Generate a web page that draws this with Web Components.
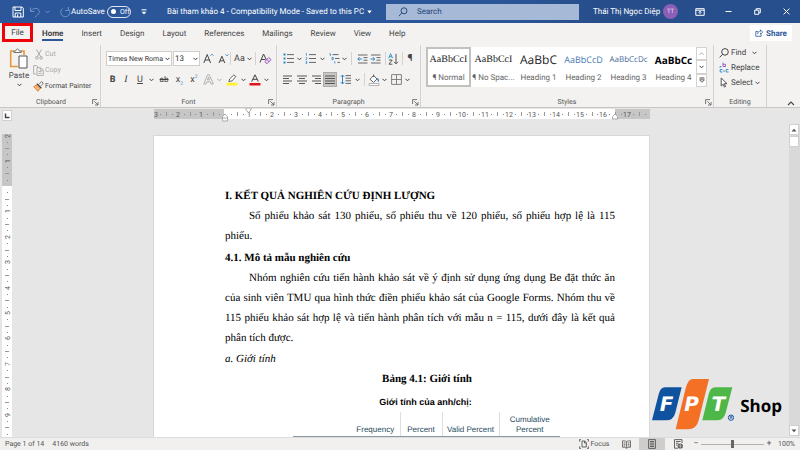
<!DOCTYPE html>
<html lang="vi">
<head>
<meta charset="utf-8">
<title>Bài tham khảo 4 - Word</title>
<style>
html, body { height: 100%; margin: 0; overflow: hidden; }
body { font-family: Roboto, "Noto Sans", sans-serif; font-size: 8px; color: #444; text-rendering: geometricPrecision; }
</style>
</head>
<body>
<word-app></word-app>
<script>
const base = `
*, *::before, *::after { box-sizing: border-box; }
button, select, input { font: inherit; color: inherit; text-rendering: inherit; margin: 0; padding: 0; border: 0; background: none; }
button { display: flex; align-items: center; justify-content: center; white-space: nowrap; }
svg { display: block; flex: none; }
`;

function define(name, css, html) {
  customElements.define(name, class extends HTMLElement {
    constructor() {
      super();
      this.attachShadow({ mode: 'open' });
    }
    connectedCallback() {
      if (this.shadowRoot.firstChild) return;
      const markup = typeof html === 'function' ? html(this) : html;
      this.shadowRoot.innerHTML = `<style>${base}${css}</style>${markup}`;
    }
  });
}

/* Icon set: [width, height, drawing] */
const lines = (rows) => rows.map(([a, b], i) => `<path d="M${a} ${i * 2.5 + 1}H${b}" stroke="#555"/>`).join('');
const icons = {
  chevron: [5, 4, '<path d="M.5 .8 2.5 2.8 4.5 .8" stroke="currentColor"/>'],
  save: [12, 12, '<path d="M1 1h9l1.3 1.2V11H1zM3 1v3.5h6V1M3.2 11V7h5.6v4M5.6 8.3V11" stroke="#fff"/>'],
  undo: [12, 12, '<path d="M1.5 1.5v4h4M1.7 5.2C4 1.8 8 1.6 9.6 3.6c1.6 2.200.6 4.600-3.600 7.400" stroke="#6f90c4"/>'],
  redo: [12, 12, '<path d="M3.600 2.500a4.600 4.600 0 1 0 5-.3M9.500 1v3.500H6" stroke="#6f90c4"/>'],
  customize: [6, 6, '<path d="M.5.8h5" stroke="#fff"/><path d="M.5 2.800h5L3 5.400z" fill="#fff"/>'],
  triangle: [5, 4, '<path d="M.3.500h4.400L2.500 3.500z" fill="#fff"/>'],
  search: [10, 10, '<circle cx="6" cy="3.800" r="3" stroke="#2b4a7c"/><path d="M3.800 6 .8 9.200" stroke="#2b4a7c"/>'],
  display: [10, 8, '<path d="M.8.700h8.400v6.600H.8zM.8 2.200h8.400M5 6V3.500M3.600 4.600 5 3.200l1.400 1.400" stroke="#fff"/>'],
  minimize: [7, 7, '<path d="M.5 3.500h6" stroke="#fff"/>'],
  restore: [7, 7, '<path d="M.7 2.200h4.100v4.100H.7zM2.200 2V.700h4.100v4.100H5" stroke="#fff"/>'],
  close: [7, 7, '<path d="m.6.6 5.800 5.800M6.400.6.6 6.400" stroke="#fff"/>'],
  share: [8, 8, '<path d="M3 2.500H.8v4.800h5.400V5.500M2.500 5c.3-2 1.500-2.700 3-2.700V.8l2.200 2.300-2.200 2.200V3.800" stroke="#2b579a" stroke-width=".8"/>'],
  paste: [20, 21, '<path d="M5 3H1.700v15.500H9" stroke="#e8973a" stroke-width="1.600"/><path d="M12 3h3v4" stroke="#e8973a" stroke-width="1.600"/><path d="M4.800 4.500V3h2c0-2.600 3.400-2.600 3.400 0h2v1.500z" fill="#fff" stroke="#666" stroke-width=".9"/><path d="M10 8h8v12h-8z" fill="#fff" stroke="#555"/>'],
  cut: [8, 11, '<path d="M1.500.5 5.700 7.600M6.500.5 2.300 7.600" stroke="#aaa"/><circle cx="1.900" cy="8.800" r="1.300" stroke="#aaa"/><circle cx="6.100" cy="8.800" r="1.300" stroke="#aaa"/>'],
  copy: [11, 11, '<path d="M3.500 9H.6V.6h3L5 2v.5M4 2.600h3.500L10.300 5v5.400H4zM7.300 2.800V5.200h2.800M5.500 6.500h3M5.500 8.300h3" stroke="#aaa" stroke-width=".9"/>'],
  painter: [11, 11, '<path d="m6.200 3 2.500-2.300 1.600 1.500L8 4.700" fill="#fff" stroke="#555" stroke-width=".9"/><path d="m3.800 2.700 4.500 4.500" stroke="#444" stroke-width="1.400"/><path d="M3.500 4 .7 5.700l4.200 4.600L7 7.600z" fill="#f6b77b" stroke="#de7a24" stroke-width=".9"/>'],
  launcher: [7, 7, '<path d="M.6 5V.6H5M2.400 2.400l3.400 3.400M6 3v3H3" stroke="#555" stroke-width=".8"/>'],
  grow: [11, 11, '<path d="m.8 10 3.400-8.500L7.600 10M2 7h4.400" stroke="#444"/><path d="m7.600 2.600 1.400-1.400 1.400 1.400" stroke="#2a88c8"/>'],
  shrink: [11, 11, '<path d="m1 10 2.900-6.800L6.800 10M2 7.800h3.800" stroke="#444"/><path d="M7.600 1.400 9 2.800l1.400-1.400" stroke="#2a88c8"/>'],
  clear: [13, 11, '<path d="M1 9.500 4.500 1 8 8M2.300 6.500h4" stroke="#444"/><path d="M6 8.300 9.700 4.500l2.400 2.200-3.700 3.700H7.200zM7.800 6.500l2.400 2.300" fill="#eadcf3" stroke="#9a52bd" stroke-width=".9"/>'],
  outlineA: [11, 11, '<path d="M.7 10 4.600.8h1.800L10.300 10H8L7.200 7.800H3.800L3 10zM4.500 5.900h2L5.500 3z" stroke="#aaa" stroke-width=".9"/>'],
  highlight: [12, 12, '<path d="M.5 8.800h11v2.700H.5z" fill="#fff12e"/><path d="M3.600 5 7.800 1l2 1.500-3.600 4.300-3.300.8z" fill="#fff" stroke="#555" stroke-width=".9"/>'],
  fontColor: [12, 12, '<path d="M.5 9h11v2.500H.5z" fill="#e3151c"/><path d="M2.700 7.600 6 .800l3.300 6.800M3.800 5.300h4.400" stroke="#444"/>'],
  bullets: [11, 11, '<path d="M4 1.600h7M4 5.500h7M4 9.400h7" stroke="#666"/><path d="M.5 1.600h2M.5 5.500h2M.5 9.400h2" stroke="#2a88c8" stroke-width="2"/>'],
  numbers: [11, 11, '<path d="M4 1.600h7M4 5.500h7M4 9.400h7" stroke="#666"/><path d="M.7.500h.8v2.300M.6 4.500h1.200v1l-1 1h1.200M.6 8.300h1.200v2.200H.6M.8 9.400h1" stroke="#2a88c8" stroke-width=".7"/>'],
  multilevel: [11, 11, '<path d="M3.500 1.600h6M6 5.500h4.500M8.500 9.400H11" stroke="#666"/><path d="M.5.700H1.400V3M3 4.500h1.200v2.200H3zM5.800 8.200v2.300" stroke="#2a88c8" stroke-width=".8"/>'],
  outdent: [11, 10, '<path d="M1 1h9.500M6.500 3.600h4M6.500 6.200h4M1 9h9.500" stroke="#666"/><path d="M5 5H.8M2.500 3.200.8 5l1.700 1.800" stroke="#2a88c8"/>'],
  indent: [11, 10, '<path d="M1 1h9.500M6.500 3.600h4M6.500 6.200h4M1 9h9.500" stroke="#666"/><path d="M.5 5h4.200M3 3.200 4.700 5 3 6.800" stroke="#2a88c8"/>'],
  sort: [11, 12, '<path d="M.6 5.200 2.600.700l2 4.500M1.300 3.800h2.600" stroke="#2a88c8" stroke-width=".9"/><path d="M.9 7h3.300L.9 11.200h3.500" stroke="#555"/><path d="M8 .8v10M6 8.800l2 2 2-2" stroke="#555"/>'],
  alignLeft: [10, 10, lines([[0, 9], [0, 6], [0, 9], [0, 6]])],
  alignCenter: [10, 10, lines([[0, 10], [2, 8], [0, 10], [2, 8]])],
  alignRight: [10, 10, lines([[1, 10], [4, 10], [1, 10], [4, 10]])],
  justify: [10, 10, lines([[0, 10], [0, 10], [0, 10], [0, 10]])],
  spacing: [12, 11, '<path d="M5.500 1.600H11M5.500 4.200H11M5.500 6.800H11M5.500 9.400H11" stroke="#666"/><path d="M2.500 1v9M.8 2.800l1.700-1.800 1.700 1.800M.8 8.200 2.500 10l1.700-1.800" stroke="#2a88c8"/>'],
  shading: [12, 12, '<path d="M1 9.500h10v2H1z" fill="#fff" stroke="#999" stroke-width=".7"/><path d="M2 5.200 5.600 1.500 9 5 5.500 8.400zM5.600 3V.5" fill="#fff" stroke="#555" stroke-width=".9"/><path d="M9 4.500c1 .3 1.600 1.500 1.300 3" stroke="#2a88c8" stroke-width="1.300"/>'],
  borders: [11, 11, '<path d="M.6.600h9.800v9.800H.6zM5.500.600v9.800M.6 5.500h9.800" stroke="#777" stroke-width=".9"/>'],
  up: [5, 4, '<path d="M.5 2.800 2.500.8 4.500 2.800" stroke="currentColor"/>'],
  more: [6, 6, '<path d="M.6 1h4.800" stroke="#444"/><path d="M.6 2.800h4.800L3 5.300z" stroke="#444" stroke-width=".8"/>'],
  find: [10, 10, '<circle cx="6" cy="3.900" r="3.300" stroke="#444"/><path d="M3.600 6.300.6 9.400" stroke="#444"/>'],
  replace: [10, 11, '<path d="M4 .5v4h2.500V2.300H4" stroke="#9a52bd" stroke-width=".9"/><path d="M3.500 7.500H1.200v2.500h2.300M9.500 7.500H7.200v2.500h2.300" stroke="#2a88c8" stroke-width=".9"/><path d="M1 6V4.500h1.500M4 9h2" stroke="#2a88c8" stroke-width=".8"/>'],
  select: [8, 11, '<path d="M1.200 1v8l2-1.800 1.200 2.900 1.100-.5-1.200-2.900H7z" fill="#fff" stroke="#444" stroke-width=".9"/>'],
  collapse: [8, 5, '<path d="m1 4 3-3 3 3" stroke="#444" stroke-width="1.100"/>'],
  tabstop: [6, 6, '<path d="M1.500.5v4H5.500" stroke="#444" stroke-width="1.500"/>'],
  arrowUp: [6, 4, '<path d="M.5 3.500h5L3 .700z" fill="#555"/>'],
  arrowDown: [6, 4, '<path d="M.5.500h5L3 3.300z" fill="#555"/>'],
  focus: [10, 10, '<path d="M2 .6H.6V2.500M.6 7.500v1.900H2M8 .6h1.400V2.500M9.400 7.500v1.900H8M3 2h2.800L7.300 3.500V8H3zM5.500 2v2h1.800" stroke="#555" stroke-width=".9"/>'],
  read: [9, 9, '<path d="M4.500 1.600C3.500.800 2 .800.500.800v6.400c1.500 0 3 .200 4 1 1-.8 2.500-1 4-1V.800c-1.500 0-3 0-4 .800v6.600M1.600 2.800h1.800M1.600 4.400h1.800M5.700 2.800h1.800M5.700 4.400h1.800M1.600 6h1.800M5.700 6h1.800" stroke="#555" stroke-width=".8"/>'],
  print: [8, 10, '<path d="M.6.600h6.800v8.800H.6zM2 2.500h4M2 4.200h4M2 5.900h4M2 7.500h4" stroke="#555" stroke-width=".9"/>'],
  web: [9, 10, '<path d="M4 9.200H.5V.600h7.500V4M2 2.500h4.500M2 4.300h2.500M2 6.100h1.500" stroke="#555" stroke-width=".9"/><circle cx="6.300" cy="7" r="2.600" fill="#555"/><path d="M4.500 7h3.600M6.300 4.800v4.400" stroke="#ddd" stroke-width=".6"/>']
};

define('app-icon', `:host { display: inline-flex; flex: none; }`, (el) => {
  const [w, h, art] = icons[el.getAttribute('name')];
  return `<svg width="${w}" height="${h}" viewBox="0 0 ${w} ${h}" fill="none" aria-hidden="true">${art}</svg>`;
});

define('title-bar', `
:host { display: flex; align-items: center; height: 23px; padding-left: 11px; color: #fff;
  background: linear-gradient(90deg, #2b579a 60%, #274e8b 75%, #284f8d); }
button { height: 23px; }
.quick { display: grid; grid-template-columns: 13px 5px 12px 12px 6px 12px; align-items: center; justify-items: center; width: 60px; }
.dim { color: #6f90c4; }
.auto { display: flex; align-items: center; justify-content: space-between; width: 60px; }
.switch { display: flex; align-items: center; gap: 4px; width: 24px; height: 12px; padding-left: 3px; border: 1px solid #dde6f3; border-radius: 6px; font-size: 7px; justify-content: flex-start; }
.switch::before { content: ""; width: 5px; height: 5px; border-radius: 50%; background: #fff; }
.custom { width: 12px; margin-left: 7px; }
.name { gap: 3px; width: 236px; padding-left: 17px; justify-content: flex-start; }
.search { display: flex; align-items: center; gap: 9px; flex: 1; height: 16px; padding-left: 12px; background: #a6b9d7; }
input { flex: 1; min-width: 0; outline: 0; color: #27477a; }
input::placeholder { color: #27477a; opacity: 1; }
.user { display: flex; align-items: center; justify-content: space-between; width: 99px; padding-left: 14px; }
.avatar { display: flex; align-items: center; justify-content: center; width: 15px; height: 15px; border-radius: 50%; background: #8b5fb5; font-size: 6px; color: #eadff4; }
.window { display: grid; grid-template-columns: 43px 15px 43px 15px; width: 122px; }
`, `
<div class="quick">
  <button aria-label="Save"><app-icon name="save"></app-icon></button><i></i>
  <button aria-label="Undo"><app-icon name="undo"></app-icon></button>
  <button aria-label="Undo list" class="dim"><app-icon name="chevron"></app-icon></button><i></i>
  <button aria-label="Redo"><app-icon name="redo"></app-icon></button>
</div>
<div class="auto"><span id="as">AutoSave</span><button class="switch" role="switch" aria-checked="false" aria-labelledby="as">Off</button></div>
<button class="custom" aria-label="Customize Quick Access Toolbar"><app-icon name="customize"></app-icon></button>
<button class="name">Bài tham khảo 4 - Compatibility Mode - Saved to this PC<app-icon name="triangle"></app-icon></button>
<label class="search"><app-icon name="search"></app-icon><input type="text" placeholder="Search" aria-label="Search"></label>
<button class="user"><span>Thái Thị Ngọc Diệp</span><span class="avatar">TT</span></button>
<div class="window">
  <button aria-label="Ribbon display options"><app-icon name="display"></app-icon></button>
  <button aria-label="Minimize"><app-icon name="minimize"></app-icon></button>
  <button aria-label="Restore"><app-icon name="restore"></app-icon></button>
  <button aria-label="Close"><app-icon name="close"></app-icon></button>
</div>`);

define('ribbon-tabs', `
:host { display: flex; align-items: flex-start; height: 22px; padding: 0 8px 0 2px; }
nav { display: flex; gap: 18px; flex: 1; }
button { height: 18px; padding-top: 2px; }
.file { width: 31px; height: 19px; border: 3px solid #f00008; padding: 0; margin-right: -9px; }
.home { position: relative; font-weight: 700; }
.home::after { content: ""; position: absolute; left: 0; right: 0; bottom: 0; height: 2px; background: #2b579a; }
.share { gap: 3px; height: 16px; margin-top: 2px; width: 42px; padding: 0; background: #fff; color: #2b579a; font-weight: 700; }
`, `
<nav>
  <button class="file">File</button><button class="home">Home</button><button>Insert</button><button>Design</button>
  <button>Layout</button><button>References</button><button>Mailings</button><button>Review</button><button>View</button><button>Help</button>
</nav>
<button class="share"><app-icon name="share"></app-icon>Share</button>`);

define('ribbon-group', `
:host { display: flex; flex-direction: column; border-right: 1px solid #d4d2d0; height: 60px; }
.body { flex: 1; min-height: 0; }
footer { display: grid; grid-template-columns: 10px 1fr 10px; align-items: center; justify-items: center; height: 10px; font-size: 7px; color: #555; }
footer span { grid-column: 2; }
`, (el) => `<div class="body"><slot></slot></div>
<footer><span>${el.getAttribute('label')}</span>${el.hasAttribute('plain') ? '' : '<button aria-label="More options"><app-icon name="launcher"></app-icon></button>'}</footer>`);

define('clipboard-tools', `
:host { display: grid; grid-template-columns: 31px 1fr; }
.paste { flex-direction: column; gap: 2px; justify-content: flex-start; padding: 3px 0 0 3px; }
.paste span { line-height: 10px; }
.list { display: grid; grid-auto-rows: 16px; padding-top: 1px; font-size: 7px; }
.list button { justify-content: flex-start; gap: 1px; }
.list app-icon { width: 11px; justify-content: center; }
.off { color: #a8a8a8; }
`, `
<button class="paste"><app-icon name="paste"></app-icon><span>Paste</span><app-icon name="chevron"></app-icon></button>
<div class="list">
  <button class="off"><app-icon name="cut"></app-icon>Cut</button>
  <button class="off"><app-icon name="copy"></app-icon>Copy</button>
  <button><app-icon name="painter"></app-icon>Format Painter</button>
</div>`);

const rowCss = `
.row { display: grid; align-items: center; justify-items: center; height: 15px; }
.row button { width: 100%; height: 15px; }
.sep { width: 1px; height: 13px; background: #d4d2d0; }
`;
const btn = (icon, label) => `<button aria-label="${label}"><app-icon name="${icon}"></app-icon></button>`;

define('font-tools', rowCss + `
:host { display: flex; flex-direction: column; gap: 6px; padding: 6px 0 0 5px; }
.first { grid-template-columns: 66px 29px 15px 14px 1px 24px 1px 19px; }
.second { grid-template-columns: 13px 14px 14px 9px 16px 15px 14px 14px 8px 18px 5px 17px 7px; }
.pick { display: grid; align-items: center; width: 100%; height: 15px; border: 1px solid #d0cecc; background: #fff; color: #333; font-size: 7px; }
.pick.size { width: 27px; font-size: 8px; }
.pick > * { grid-area: 1 / 1; }
select { appearance: none; width: 100%; padding-left: 1px; outline: 0; }
.pick app-icon { justify-self: end; margin-right: 1px; pointer-events: none; }
.case { gap: 2px; font-size: 9px; }
.lg { font-size: 9px; }
.i { font-family: "Liberation Serif", serif; font-style: italic; font-size: 10px; }
sub, sup { font-size: 5px; line-height: 0; color: #2a88c8; }
.grey { color: #aaa; }
`, `
<div class="row first">
  <span class="pick"><select aria-label="Font"><option>Times New Roma</option></select><app-icon name="chevron"></app-icon></span>
  <span class="pick size"><select aria-label="Font size"><option>13</option></select><app-icon name="chevron"></app-icon></span>
  ${btn('grow', 'Increase font size')}${btn('shrink', 'Decrease font size')}<i class="sep"></i>
  <button class="case" aria-label="Change case">Aa<app-icon name="chevron"></app-icon></button><i class="sep"></i>
  ${btn('clear', 'Clear formatting')}
</div>
<div class="row second">
  <button class="lg"><b>B</b></button><button class="i">I</button><button class="lg"><u>U</u></button>${btn('chevron', 'Underline style')}
  <button><s>ab</s></button><button class="lg"><span>x<sub>2</sub></span></button><button class="lg"><span>x<sup>2</sup></span></button>
  ${btn('outlineA', 'Text effects')}<button class="grey" aria-label="Text effects list"><app-icon name="chevron"></app-icon></button>
  ${btn('highlight', 'Highlight')}${btn('chevron', 'Highlight colors')}${btn('fontColor', 'Font color')}${btn('chevron', 'Font colors')}
</div>`);

define('paragraph-tools', rowCss + `
:host { display: flex; flex-direction: column; gap: 6px; padding: 6px 0 0 4px; }
.first { grid-template-columns: 14px 8px 15px 8px 16px 5px 9px 12px 15px 4px 13px 4px 12px; justify-content: start; }
.second { grid-template-columns: 14px 14px 14px 14px 18px 5px 8px 12px 8px 16px 6px; justify-content: start; }
.on { background: #c8c6c4; border: 1px solid #aaa; }
.mark { font-size: 10px; font-weight: 700; }
`, `
<div class="row first">
  ${btn('bullets', 'Bullets')}${btn('chevron', 'Bullet library')}${btn('numbers', 'Numbering')}${btn('chevron', 'Numbering library')}
  ${btn('multilevel', 'Multilevel list')}${btn('chevron', 'List library')}<i class="sep"></i>
  ${btn('outdent', 'Decrease indent')}${btn('indent', 'Increase indent')}<i class="sep"></i>${btn('sort', 'Sort')}<i class="sep"></i><button class="mark">¶</button>
</div>
<div class="row second">
  ${btn('alignLeft', 'Align left')}${btn('alignCenter', 'Center')}${btn('alignRight', 'Align right')}
  <button class="on" aria-label="Justify" aria-pressed="true"><app-icon name="justify"></app-icon></button>
  ${btn('spacing', 'Line spacing')}${btn('chevron', 'Line spacing options')}<i class="sep"></i>
  ${btn('shading', 'Shading')}${btn('chevron', 'Shading colors')}${btn('borders', 'Borders')}${btn('chevron', 'Border options')}
</div>`);

define('style-card', `
:host { display: block; flex: 1; min-width: 0; }
button { flex-direction: column; width: 100%; height: 40px; gap: 4px; }
:host([selected]) button { border: 2px solid #c0c2be; }
.sample { white-space: nowrap; height: 16px; line-height: 16px; color: #222; font-family: "Open Sans", sans-serif; }
.sample.serif { font-family: "Liberation Serif", serif; font-size: 10px; }
.sample.h1 { font-size: 12px; }
.sample.h2 { font-size: 9px; color: #4a7ab8; }
.sample.h3 { font-size: 8px; color: #47699a; }
.sample.h4 { font-size: 10px; font-weight: 700; color: #000; }
.label { line-height: 11px; white-space: nowrap; color: #666; }
`, (el) => `<button><span class="sample ${el.getAttribute('kind')}">${el.getAttribute('sample')}</span><span class="label"><slot></slot></span></button>`);

define('style-gallery', `
:host { display: flex; margin: 2px 6px 0 5px; background: #fff; height: 40px; }
.scroll { display: grid; grid-template-rows: 1fr 1fr 1fr; width: 11px; }
.scroll button { border: 1px solid #d4d2d0; }
.off { color: #aaa; }
`, `
<style-card selected kind="serif" sample="AaBbCcI">¶ Normal</style-card>
<style-card kind="serif" sample="AaBbCcI">¶ No Spac...</style-card>
<style-card kind="h1" sample="AaBbC">Heading 1</style-card>
<style-card kind="h2" sample="AaBbCcD">Heading 2</style-card>
<style-card kind="h3" sample="AaBbCcDc">Heading 3</style-card>
<style-card kind="h4" sample="AaBbCc">Heading 4</style-card>
<div class="scroll">
  <button class="off" aria-label="Previous styles"><app-icon name="up"></app-icon></button>
  <button aria-label="Next styles"><app-icon name="chevron"></app-icon></button>
  <button aria-label="All styles"><app-icon name="more"></app-icon></button>
</div>`);

define('editing-tools', `
:host { display: grid; grid-auto-rows: 15px; padding-left: 5px; }
button { gap: 2px; justify-content: flex-start; }
.icon { display: flex; justify-content: center; width: 10px; }
.far { margin-left: 4px; }
`, `
<button><span class="icon"><app-icon name="find"></app-icon></span>Find<app-icon class="far" name="chevron"></app-icon></button>
<button><span class="icon"><app-icon name="replace"></app-icon></span>Replace</button>
<button><span class="icon"><app-icon name="select"></app-icon></span>Select<app-icon name="chevron"></app-icon></button>`);

define('word-ribbon', `
:host { display: flex; height: 63px; padding-left: 2px; border-bottom: 1px solid #c8c6c4; }
.clip { flex: 0 0 99px; } .font { flex: 0 0 176px; } .para { flex: 0 0 144px; } .styles { flex: 1; } .edit { flex: 0 0 53px; }
.end { display: flex; align-items: flex-end; justify-content: flex-end; width: 33px; padding: 0 5px 1px 0; }
ribbon-group { height: 62px; }
`, `
<ribbon-group class="clip" label="Clipboard"><clipboard-tools></clipboard-tools></ribbon-group>
<ribbon-group class="font" label="Font"><font-tools></font-tools></ribbon-group>
<ribbon-group class="para" label="Paragraph"><paragraph-tools></paragraph-tools></ribbon-group>
<ribbon-group class="styles" label="Styles"><style-gallery></style-gallery></ribbon-group>
<ribbon-group class="edit" label="Editing" plain><editing-tools></editing-tools></ribbon-group>
<button class="end" aria-label="Collapse the ribbon"><app-icon name="collapse"></app-icon></button>`);

/* Ruler scale: numbers at whole units, a dash at halves, dots at quarters. */
function scale(zero, unit, from, to, place) {
  let out = '';
  for (let q = from * 4; q <= to * 4; q++) {
    const p = Math.round(zero + q * unit / 4);
    if (q % 4 === 0) { if (q) out += place(p, 'num', Math.abs(q / 4)); }
    else out += place(p, q % 2 === 0 ? 'half' : 'dot');
  }
  return out;
}

define('page-ruler', `
:host { display: block; width: 496px; height: 14px; }
text { font-size: 7px; fill: #555; text-anchor: middle; }
`, () => `<svg width="496" height="14" aria-label="Horizontal ruler">
<path d="M0 1h70v10H0zM461 1h35v10h-35z" fill="#c6c6c6"/><path d="M70 1h391v10H70z" fill="#fff"/>
${scale(71, 23.65, -3, 17.75, (p, kind, n) => kind === 'num' ? `<text x="${Math.max(p, 2)}" y="9">${n}</text>`
  : kind === 'half' ? `<path d="M${p} 4h1v4h-1z" fill="#999"/>` : `<path d="M${p} 6h1v1h-1z" fill="#888"/>`)}
<path d="M92 0h5v2l-2.500 2.500L92 2z" fill="#fff" stroke="#999" stroke-width=".8"/>
<path d="M68.500 13V8.500L71 6l2.500 2.500V13zM68.500 10h5" fill="#fff" stroke="#999" stroke-width=".8"/>
<path d="M458.500 11V8.500L461 6l2.500 2.500V11z" fill="#fff" stroke="#999" stroke-width=".8"/></svg>`);

define('side-ruler', `
:host { display: block; width: 10px; min-height: 0; overflow: hidden; background: #fff; }
text { font-size: 7px; fill: #555; text-anchor: middle; }
`, () => `<svg width="10" height="303" aria-label="Vertical ruler">
<path d="M0 0h10v52H0z" fill="#c6c6c6"/>
${scale(52, 25.4, -2, 9.75, (p, kind, n) => kind === 'num' ? `<text transform="translate(8 ${Math.max(p, 2)}) rotate(-90)">${n}</text>`
  : kind === 'half' ? `<path d="M3 ${p}h4v1H3z" fill="#999"/>` : `<path d="M5 ${p}h1v1H5z" fill="#888"/>`)}</svg>`);

define('doc-page', `
:host { display: block; width: 495px; padding: 50px 34px 0 71px; background: #fff; color: #000;
  font-family: "Liberation Serif", serif; font-size: 11px; line-height: 20px; box-shadow: 0 0 0 1px #d8d8d8; }
h1, h2, p { margin: 0; font-size: 11px; }
h2 { margin-top: 2px; }
p { text-align: justify; text-indent: 24px; }
.sub { font-style: italic; text-indent: 0; margin-top: 1px; }
.title { text-align: center; text-indent: 14px; font-weight: 700; }
table { width: 267px; margin: 3px 0 0 68px; border-collapse: collapse; font: 8px/10px "Liberation Sans", sans-serif; color: #264a60; }
caption { font-size: 9px; line-height: 20px; font-weight: 700; color: #000; padding-right: 2px; }
th { height: 24px; padding: 0 0 1px; font-weight: 400; vertical-align: bottom; border-bottom: 1px solid #8c97a0; }
th + th + th { border-left: 1px solid #dcdfe2; }
`, `
<h1>I. KẾT QUẢ NGHIÊN CỨU ĐỊNH LƯỢNG</h1>
<p>Số phiếu khảo sát 130 phiếu, số phiếu thu về 120 phiếu, số phiếu hợp lệ là 115 phiếu.</p>
<h2>4.1. Mô tả mẫu nghiên cứu</h2>
<p>Nhóm nghiên cứu tiến hành khảo sát về ý định sử dụng ứng dụng Be đặt thức ăn của sinh viên TMU qua hình thức điền phiếu khảo sát của Google Forms. Nhóm thu về 115 phiếu khảo sát hợp lệ và tiến hành phân tích với mẫu n = 115, dưới đây là kết quả phân tích được.</p>
<p class="sub">a. Giới tính</p>
<p class="title">Bảng 4.1: Giới tính</p>
<table>
  <caption>Giới tính của anh/chị:</caption>
  <colgroup><col style="width:58px"><col style="width:49px"><col style="width:42px"><col style="width:57px"><col></colgroup>
  <thead><tr><th></th><th scope="col">Frequency</th><th scope="col">Percent</th><th scope="col">Valid Percent</th><th scope="col">Cumulative<br>Percent</th></tr></thead>
</table>`);

define('scroll-bar', `
:host { display: flex; flex-direction: column; width: 11px; margin: 16px 0 1px; background: #d9d9d9; }
button, .thumb { width: 10px; height: 11px; background: #fff; border: 1px solid #d0d0d0; }
.track { flex: 1; padding-top: 1px; }
`, `
<button aria-label="Scroll up"><app-icon name="arrowUp"></app-icon></button>
<div class="track"><div class="thumb"></div></div>
<button aria-label="Scroll down"><app-icon name="arrowDown"></app-icon></button>`);

define('word-workspace', `
:host { display: grid; grid-template-columns: 14px minmax(0, 1fr) 11px; min-height: 0; overflow: hidden; background: #e6e6e6; }
.left { display: flex; flex-direction: column; gap: 13px; padding: 2px 0 0 2px; min-height: 0; }
.tab { width: 10px; height: 11px; background: #fff; border: 1px solid #d0d0d0; }
side-ruler { flex: 1; }
.center { display: flex; flex-direction: column; align-items: center; gap: 14px; min-height: 0; overflow: hidden; }
doc-page { flex: 1 0 auto; }
`, `
<div class="left"><button class="tab" aria-label="Tab selector"><app-icon name="tabstop"></app-icon></button><side-ruler></side-ruler></div>
<div class="center"><page-ruler></page-ruler><doc-page></doc-page></div>
<scroll-bar></scroll-bar>`);

define('status-bar', `
:host { display: flex; align-items: center; height: 13px; padding: 0 5px; background: #f1f0ef; border-top: 1px solid #dcdcdc; font-size: 7px; color: #555; }
button { height: 13px; }
.count { flex: 1; justify-content: flex-start; margin-left: 8px; }
.focus { gap: 2px; width: 28px; margin-right: 5px; }
.view { width: 26px; }
.on { background: #cfcdcb; }
.step { width: 10px; font-size: 9px; }
input { appearance: none; width: 63px; height: 9px; margin: 0; background: linear-gradient(#b0b0b0, #b0b0b0) center / 100% 1px no-repeat; }
input::-webkit-slider-thumb { appearance: none; width: 3px; height: 8px; background: #666; }
.zoom { width: 21px; justify-content: flex-end; }
`, `
<button>Page 1 of 14</button><button class="count">4160 words</button>
<button class="focus"><app-icon name="focus"></app-icon>Focus</button>
<button class="view" aria-label="Read mode"><app-icon name="read"></app-icon></button>
<button class="view on" aria-label="Print layout"><app-icon name="print"></app-icon></button>
<button class="view" aria-label="Web layout"><app-icon name="web"></app-icon></button>
<button class="step" aria-label="Zoom out">−</button>
<input type="range" min="0" max="100" value="50" aria-label="Zoom">
<button class="step" aria-label="Zoom in">+</button>
<button class="zoom">100%</button>`);

define('fpt-logo', `
:host { display: flex; align-items: center; gap: 6px; color: #000; font: 700 17px "Open Sans", sans-serif; }
text { font: italic 700 60px "DejaVu Sans", sans-serif; fill: #fff; text-anchor: middle; }
.reg { font: 700 13px "Liberation Sans", sans-serif; fill: #1b57a6; }
span { padding-top: 4px; }
`, `
<svg width="83" height="53" viewBox="240 35 249 159" role="img" aria-label="FPT">
  <path d="M282 66h50l-19 76q-6 23-28 23h-42l20-78q5-21 19-21z" fill="#0f529f"/>
  <path d="M366 41h48l-31 124q-6 27-32 27h-37l30-123q7-28 22-28z" fill="#f37024"/>
  <path d="M432 66h52l-20 76q-6 23-28 23h-42l19-78q5-21 19-21z" fill="#4db748"/>
  <text x="287" y="138">F</text><text x="362" y="138">P</text><text x="442" y="138">T</text>
  <circle cx="480" cy="157" r="8" fill="none" stroke="#1b57a6" stroke-width="3"/><text class="reg" x="480" y="162">R</text>
</svg><span>Shop</span>`);

define('word-app', `
:host { display: grid; grid-template-rows: auto auto auto minmax(0, 1fr) auto; height: 100vh; background: #f3f2f1; position: relative; }
fpt-logo { position: absolute; right: 18px; bottom: 20px; }
`, `
<title-bar></title-bar><ribbon-tabs></ribbon-tabs><word-ribbon></word-ribbon>
<word-workspace></word-workspace><status-bar></status-bar><fpt-logo></fpt-logo>`);
</script>
</body>
</html>
